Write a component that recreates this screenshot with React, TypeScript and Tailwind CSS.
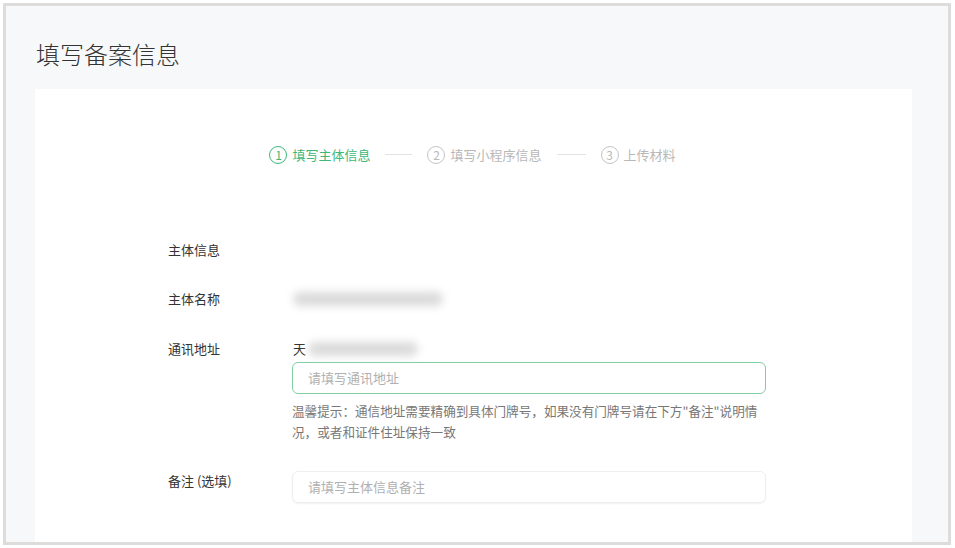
import React from "react";

const font = { fontFamily: '"Noto Sans CJK SC", "Noto Sans", sans-serif' };

function Step({ n, label, active }: { n: string; label: string; active?: boolean }) {
  return (
    <div className={`flex items-center gap-[5px] ${active ? "text-[#3cb878]" : "text-[#b8b8b8]"}`}>
      <span
        className={`flex h-[18px] w-[18px] items-center justify-center rounded-full border text-[12px] leading-none ${
          active ? "border-[#3cb878]" : "border-[#c4c4c4]"
        }`}
      >
        {n}
      </span>
      <span className="text-[13px]">{label}</span>
    </div>
  );
}

function Blur({ w }: { w: number }) {
  return (
    <div className="h-[14px] rounded-full bg-[#dadada] blur-[4px]" style={{ width: w }} />
  );
}

export default function App() {
  return (
    <div className="h-[548px] w-[955px] bg-white p-[3px]" style={font}>
      <div className="flex h-[542px] w-[948px] flex-col border-[3px] border-[#dedbdb] bg-[#f7f8fa] pl-[29px] pr-[36px]">
        <h1 className="mt-[31px] h-[52px] pl-[1px] text-[24px] font-light leading-[34px] text-[#333]">填写备案信息</h1>
        <div className="flex-1 bg-white">
          <div className="mt-[56px] flex items-center justify-center gap-[15px] pr-[2px]">
            <Step n="1" label="填写主体信息" active />
            <div className="h-px w-[27px] bg-[#e3e3e3]" />
            <Step n="2" label="填写小程序信息" />
            <div className="h-px w-[29px] bg-[#e3e3e3]" />
            <Step n="3" label="上传材料" />
          </div>
          <div className="mt-[75px] pl-[133px] text-[13px] text-[#333]">
            <div className="h-[20px] leading-[20px]">主体信息</div>
            <div className="mt-[29px] flex h-[20px] items-center">
              <span className="w-[125px]">主体名称</span>
              <Blur w={150} />
            </div>
            <div className="mt-[30px] flex">
              <span className="w-[124px] leading-[20px]">通讯地址</span>
              <div className="w-[474px]">
                <div className="flex h-[20px] items-center gap-[2px] pl-[1px]">
                  <span>天</span>
                  <Blur w={110} />
                </div>
                <div className="mt-[3px] flex h-[32px] items-center rounded-[6px] border border-[#7fcfa3] px-[15px] text-[#b0b0b0]">
                  请填写通讯地址
                </div>
                <p className="mt-[6px] w-[480px] whitespace-nowrap text-[12.6px] leading-[21px] text-[#777]">
                  温馨提示：通信地址需要精确到具体门牌号，如果没有门牌号请在下方"备注"说明情
                  <br />
                  况，或者和证件住址保持一致
                </p>
              </div>
            </div>
            <div className="mt-[29px] flex">
              <span className="w-[124px] leading-[20px]">备注 (选填)</span>
              <div className="flex h-[32px] w-[474px] items-center rounded-[6px] border border-[#eeeeee] px-[15px] text-[#b0b0b0] shadow-[0_1px_2px_rgba(0,0,0,0.06)]">
                请填写主体信息备注
              </div>
            </div>
          </div>
        </div>
      </div>
    </div>
  );
}
